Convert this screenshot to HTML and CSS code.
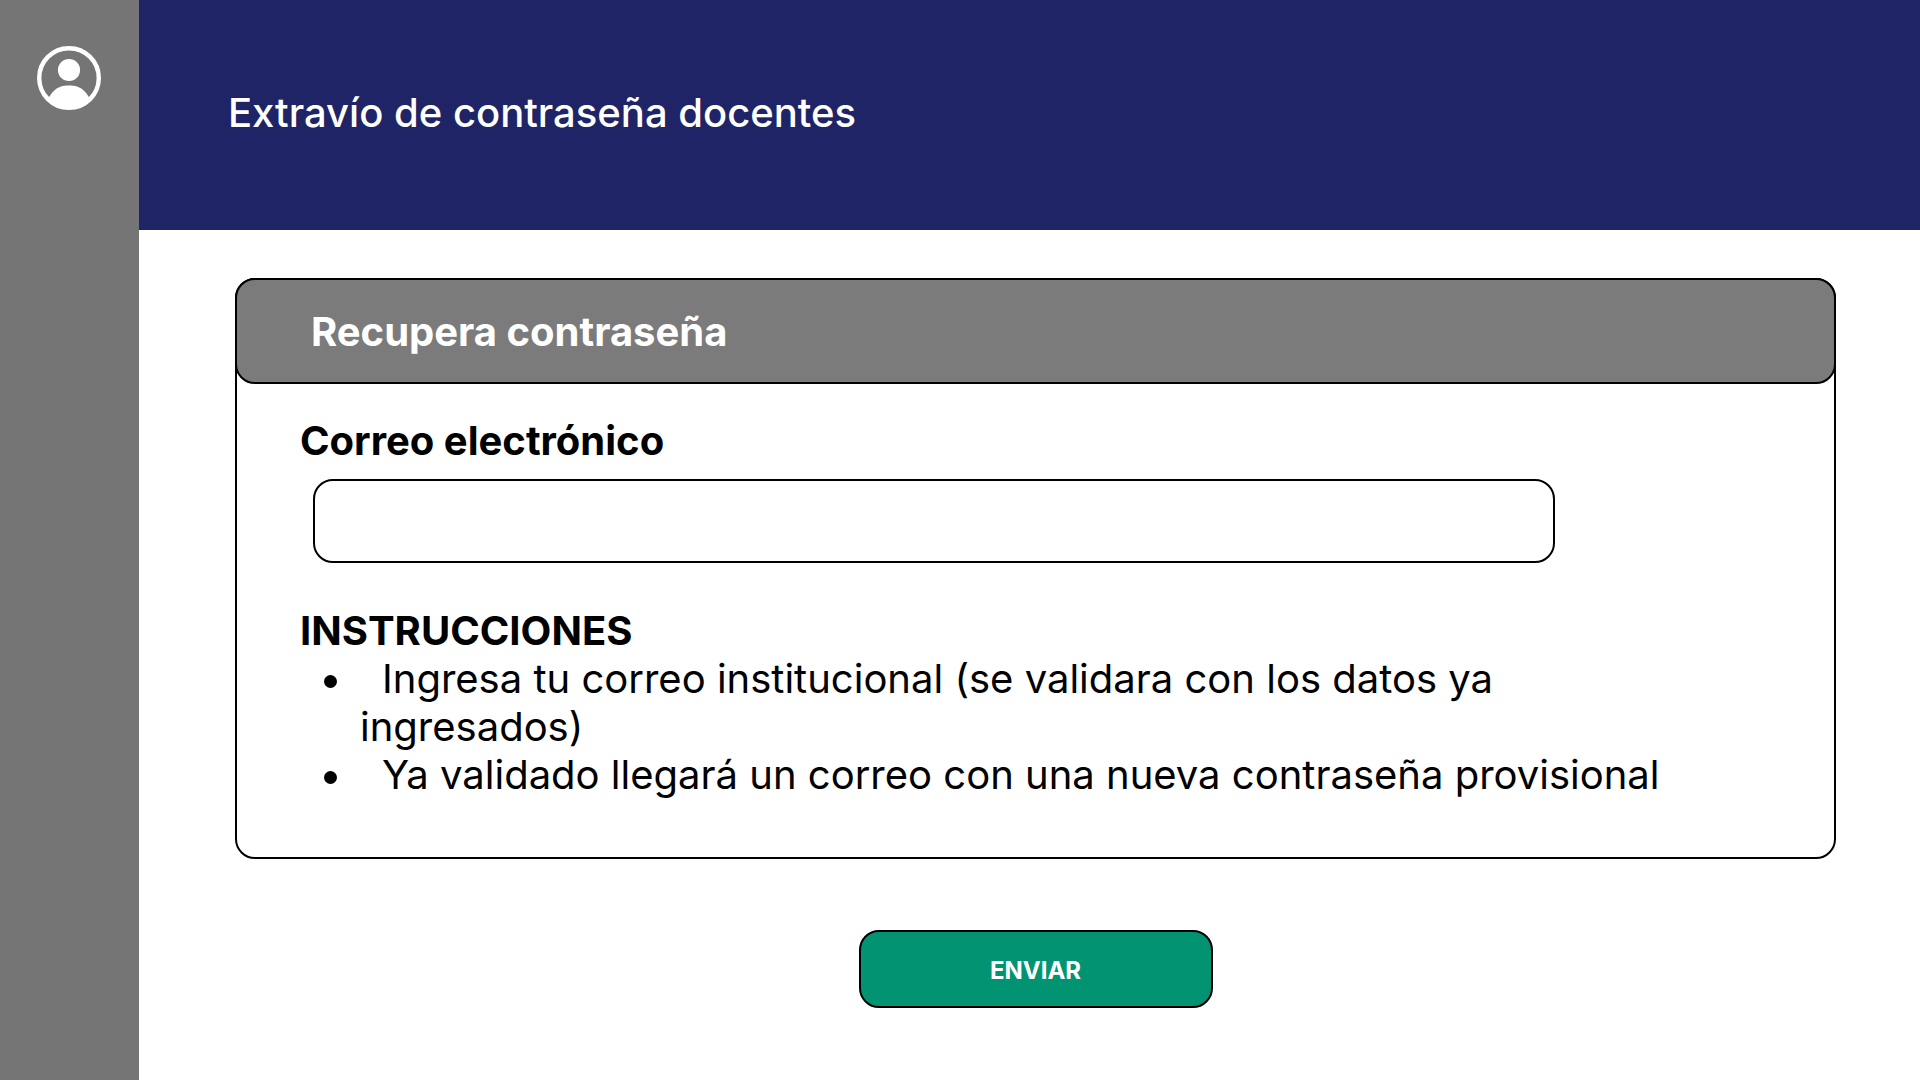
FILE: index.html
```html
<!DOCTYPE html>
<html lang="es">
<head>
<meta charset="utf-8">
<title>Extravío de contraseña docentes</title>
<link rel="stylesheet" href="styles.css">
</head>
<body>
<div class="app">
  <aside class="sidebar">
    <svg class="avatar" viewBox="0 0 64 64" role="img" aria-label="Usuario">
      <defs><clipPath id="ring"><circle cx="32" cy="32" r="30"/></clipPath></defs>
      <circle cx="32" cy="32" r="29.8" fill="none" stroke="#fff" stroke-width="4.4"/>
      <circle cx="32" cy="24" r="11.1" fill="#fff"/>
      <path clip-path="url(#ring)" d="M11 53C16 43 23 39.4 30 39.4H34C41 39.4 48 43 53 53L48 64H16Z" fill="#fff"/>
    </svg>
  </aside>
  <div class="page">
    <header class="banner"><h1 class="title">Extravío de contraseña docentes</h1></header>
    <main>
      <form class="form">
        <section class="card">
          <h2 class="card-title">Recupera contraseña</h2>
          <div class="card-body">
            <label class="label" for="email">Correo electrónico</label>
            <input class="field" id="email" type="email">
            <h3 class="label">INSTRUCCIONES</h3>
            <ul class="steps">
              <li>Ingresa tu correo institucional (se validara con los datos ya ingresados)</li>
              <li>Ya validado llegará un correo con una nueva contraseña provisional</li>
            </ul>
          </div>
        </section>
        <button class="submit" type="button">ENVIAR</button>
      </form>
    </main>
  </div>
</div>
</body>
</html>
```
FILE: styles.css
```css
* { box-sizing: border-box; }
body { margin: 0; font-family: Inter, "Liberation Sans", sans-serif; font-size: 40px; line-height: 48px; color: #000; background: #fff; }
h1, h2, h3 { margin: 0; font-size: 40px; line-height: 48px; }
.app { display: flex; min-height: 100vh; }
.sidebar { flex: 0 0 139px; padding: 46px 37px 0; background: #757575; }
.avatar { display: block; width: 64px; height: 64px; }
.page { flex: 1; min-width: 0; }
.banner { height: 230px; padding: 89px 89px 0; background: #1e2466; color: #fff; }
.title { font-weight: 500; }
.form { display: flex; flex-direction: column; align-items: center; padding: 48px 84px 72px 96px; }
.card { align-self: stretch; border: 2px solid #000; border-radius: 20px; }
.card-title { margin: -2px; padding: 28px 74px 26px; border: 2px solid #000; border-radius: 20px; background: #7b7b7b; color: #fff; font-weight: 700; }
.card-body { padding: 35px 63px 58px; }
.label { display: block; font-weight: 700; }
.field { display: block; width: calc(100% - 229px); height: 84px; margin: 14px 13px 44px; padding: 0 24px; border: 2px solid #000; border-radius: 20px; background: #fff; font: inherit; }
.steps { margin: 0; padding-left: 60px; font-weight: 400; list-style: none; }
.steps li { max-width: 1320px; text-indent: 22px; }
.steps li::before { content: ""; display: inline-block; width: 13px; height: 13px; margin: 0 45px 5px -58px; border-radius: 50%; background: #000; vertical-align: baseline; }
.submit { width: 354px; height: 78px; margin-top: 71px; padding-top: 4px; border: 2px solid #000; border-radius: 20px; background: #029472; color: #fff; font: 700 24px/28px Inter, "Liberation Sans", sans-serif; }
```
